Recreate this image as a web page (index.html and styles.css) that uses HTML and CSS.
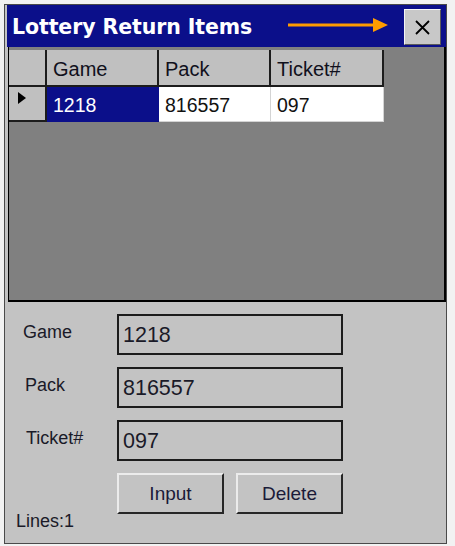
FILE: index.html
```html
<!DOCTYPE html>
<html lang="en">
<head>
  <meta charset="UTF-8">
  <title>Lottery Return Items</title>
  <link rel="stylesheet" href="styles.css">
</head>
<body>
  <div class="window">
    <div class="title-bar">
      <span class="title">Lottery Return Items</span>
      <svg class="hint-arrow" width="100" height="16" viewBox="0 0 100 16">
        <line x1="0" y1="8" x2="86" y2="8" stroke="#ff9c00" stroke-width="3"></line>
        <polygon points="85,1 100,8 85,15" fill="#ff9c00"></polygon>
      </svg>
      <button class="close-btn">
        <svg width="15" height="15" viewBox="0 0 15 15">
          <path d="M1 1 L14 14 M14 1 L1 14" stroke="#000" stroke-width="1.8"></path>
        </svg>
      </button>
    </div>

    <div class="grid-area">
      <div class="data-grid">
        <div class="cell head corner"></div>
        <div class="cell head">Game</div>
        <div class="cell head">Pack</div>
        <div class="cell head">Ticket#</div>

        <div class="cell row-head"><span class="row-marker"></span></div>
        <div class="cell selected">1218</div>
        <div class="cell">816557</div>
        <div class="cell">097</div>
      </div>
    </div>

    <div class="panel">
      <div class="form-row">
        <label class="field-label">Game</label>
        <div class="field">1218</div>
      </div>
      <div class="form-row">
        <label class="field-label pack">Pack</label>
        <div class="field">816557</div>
      </div>
      <div class="form-row">
        <label class="field-label ticket">Ticket#</label>
        <div class="field">097</div>
      </div>
      <div class="form-row">
        <span></span>
        <div class="actions">
          <button class="btn">Input</button>
          <button class="btn">Delete</button>
        </div>
      </div>
      <div class="lines">Lines:1</div>
    </div>
  </div>
</body>
</html>
```

FILE: styles.css
```css
:root {
  --navy: #0b0f8a;
  --face: #c3c3c3;
  --dark: #1c1c1c;
}

* {
  margin: 0;
  padding: 0;
  box-sizing: border-box;
}

body {
  background-color: #f2f2f2;
  font-family: "Liberation Sans", Arial, sans-serif;
  color: #1a1a28;
}

.window {
  width: 443px;
  height: 540px;
  margin: 4px 0 0 4px;
  border: 1px solid #4a4a4a;
  background-color: var(--face);
  padding: 0 0 0 2px;
  display: flex;
  flex-direction: column;
}

.title-bar {
  height: 42px;
  background-color: var(--navy);
  display: flex;
  align-items: flex-start;
  padding: 0 5px 0 5px;
}

.title {
  font-family: "DejaVu Sans", Verdana, sans-serif;
  font-weight: bold;
  font-size: 20.5px;
  color: #fff;
  margin-top: 10px;
  letter-spacing: -0.1px;
}

.hint-arrow {
  margin: 12px 16px 0 auto;
}

.close-btn {
  width: 37px;
  height: 36px;
  margin-top: 4px;
  background-color: #c8c8c8;
  border: 1px solid;
  border-color: #f4f4f4 #5a5a5a #5a5a5a #f4f4f4;
  display: flex;
  align-items: center;
  justify-content: center;
}

.grid-area {
  height: 255px;
  margin-left: 1px;
  background-color: #808080;
  border-left: 1px solid #000;
  border-right: 2px solid #000;
  border-bottom: 2px solid #000;
  padding-top: 3px;
}

.data-grid {
  display: grid;
  grid-template-columns: 38px 112px 112px 113px;
  grid-template-rows: 37px 35px;
}

.cell {
  background-color: #fff;
  border-right: 1px solid #d4d4d4;
  border-bottom: 1px solid #d4d4d4;
  font-size: 19.5px;
  color: #111;
  padding: 7px 0 0 6px;
}

.cell.head {
  background-color: #c0c0c0;
  border-right: 2px solid var(--dark);
  border-bottom: 2px solid var(--dark);
  font-size: 20px;
  color: #10101c;
  padding: 8px 0 0 6px;
}

.cell.row-head {
  background-color: #c0c0c0;
  border-right: 2px solid var(--dark);
  border-bottom: 2px solid var(--dark);
  padding: 5px 0 0 9px;
}

.row-marker {
  display: block;
  width: 0;
  height: 0;
  border-top: 6px solid transparent;
  border-bottom: 6px solid transparent;
  border-left: 8px solid #000;
}

.cell.selected {
  background-color: var(--navy);
  border-color: var(--navy);
  color: #fff;
}

.panel {
  flex: 1;
  padding: 12px 0 0 9px;
  display: flex;
  flex-direction: column;
  gap: 12px;
}

.form-row {
  display: grid;
  grid-template-columns: 101px 226px;
  align-items: center;
}

.field-label {
  font-size: 18px;
  padding: 0 0 4px 7px;
}

.field-label.pack {
  padding-left: 9px;
}

.field-label.ticket {
  padding-left: 10px;
}

.field {
  height: 41px;
  border: 2px solid var(--dark);
  font-size: 21.5px;
  padding: 7px 0 0 4px;
}

.actions {
  display: flex;
  gap: 12px;
}

.btn {
  width: 107px;
  height: 41px;
  background-color: var(--face);
  border: 2px solid;
  border-color: #ececec #262626 #262626 #ececec;
  font-family: "Liberation Sans", Arial, sans-serif;
  font-size: 19px;
  color: #1a1a38;
}

.lines {
  margin-top: -14px;
  font-size: 18px;
  line-height: 18px;
}
```
